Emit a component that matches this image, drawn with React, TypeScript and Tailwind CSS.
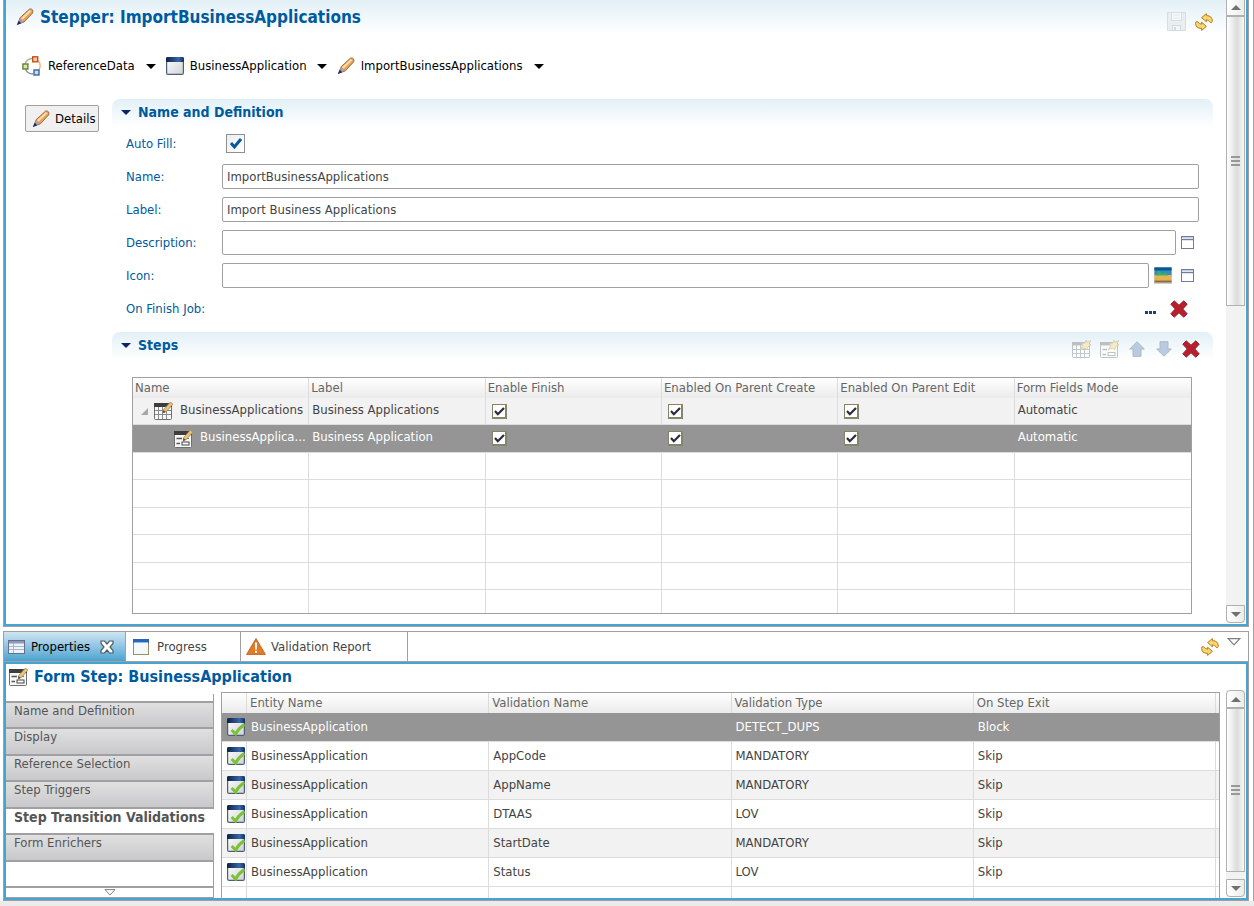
import React, { useState } from "react";

type IconProps = { className?: string };

const PencilIcon = ({ className = "size-[18px]" }: IconProps) => (
	<svg viewBox="0 0 18 18" className={className} aria-hidden="true">
		<path d="M13.6 1 L4.2 9.6 L2.4 14.2 L4 15.4 L8.2 14 L16.6 5 C17.6 2.4 16.2 .4 13.6 1Z" fill="#e5a05a" stroke="#94683c" strokeWidth=".9" />
		<path d="M13.8 2 L5 10.2 L6.6 11.8 L15.4 3.2Z" fill="#fcdcaa" />
		<path d="M4 10.4 L7.6 13.8 L4 15.2 L2.6 14.2Z" fill="#a8a0ac" />
		<path d="M2.8 12.8 L5.2 15.2 L1.4 17 L.8 16.4Z" fill="#1f2a66" />
	</svg>
);

const ModelIcon = () => (
	<svg viewBox="0 0 20 20" className="size-5" aria-hidden="true">
		<path d="M10 2.5 A8 8 0 0 0 3 8" fill="none" stroke="#9dba88" strokeWidth="1.3" />
		<path d="M3.5 13 A8 8 0 0 0 11 18" fill="none" stroke="#7690b8" strokeWidth="1.3" />
		<path d="M16 4.5 A8 8 0 0 1 16.8 14" fill="none" stroke="#f5b48a" strokeWidth="1.5" />
		<rect x="10.7" y=".8" width="5" height="5" fill="#f3c7a5" stroke="#c0551c" strokeWidth="1.4" />
		<rect x=".9" y="8" width="5" height="5" fill="#d7e5b4" stroke="#66822e" strokeWidth="1.4" />
		<rect x="12" y="14" width="5" height="5" fill="#c8dcf0" stroke="#3c649b" strokeWidth="1.4" />
	</svg>
);

const EntityIcon = ({ checked = false }: { checked?: boolean }) => (
	<svg viewBox="0 0 18 18" className="size-[18px]" aria-hidden="true">
		<defs>
			<linearGradient id="entityBar">
				<stop offset="0" stopColor="#0d2144" />
				<stop offset=".7" stopColor="#3767a8" />
				<stop offset="1" stopColor="#12305f" />
			</linearGradient>
			<linearGradient id="entityBody" x1="0" y1="0" x2="1" y2="1">
				<stop offset="0" stopColor="#ffffff" />
				<stop offset="1" stopColor="#cfd1d3" />
			</linearGradient>
		</defs>
		<rect x=".6" y=".6" width="16.8" height="16.8" rx="1.5" fill="url(#entityBody)" stroke="#4d5f78" strokeWidth="1.2" />
		<path d="M0 5 V1.5 Q0 0 1.5 0 H16.5 Q18 0 18 1.5 V5Z" fill="url(#entityBar)" />
		{checked && (
			<path d="M4.6 12 L8.6 16 Q11.5 10.4 17.4 6.6" fill="none" stroke="#7cc138" strokeWidth="3" />
		)}
	</svg>
);

const RefreshIcon = () => (
	<svg viewBox="0 0 18 18" className="size-[18px]" aria-hidden="true">
		<g fill="#f8d670" stroke="#b57e1d" strokeWidth="1" strokeLinejoin="round">
			<path d="M6.6 4.6 L11.4 .6 V2.6 Q17.2 2.6 17.4 8.4 L16.2 9.8 L14.6 8.8 Q14 6.8 11.4 6.8 V8.8Z" />
			<path d="M11.4 13.4 L6.6 17.4 V15.4 Q.8 15.4 .6 10.4 L.8 9 L2.6 8.6 Q4.2 11.2 6.6 11.2 V9.2Z" />
		</g>
	</svg>
);

const SaveIcon = () => (
	<svg viewBox="0 0 19 19" className="size-[19px]" aria-hidden="true">
		<path d="M.5 .5 H18.5 V18.5 H.5Z" fill="#e9eef1" stroke="#d8dde0" />
		<rect x="4.5" y=".5" width="10" height="8" fill="#f6f8f9" stroke="#d8dde0" />
		<path d="M6 3 H13 M6 6 H13" stroke="#e6eaec" />
		<rect x="5.5" y="13.5" width="8" height="5" fill="#f3f5f6" stroke="#d5dadd" />
		<rect x="7" y="15" width="2" height="3" fill="#d5dadd" />
	</svg>
);

// step icons: a grid for collections, a form for single records
const StepIcon = ({ form = false }: { form?: boolean }) => (
	<svg viewBox="0 0 19 18" className="h-[18px] w-[19px]" aria-hidden="true">
		<rect x=".5" y="1.5" width="17" height="16" rx="1" fill="#f7f7f7" stroke="#707070" />
		<path d="M0 1 H18 V5 H0Z" fill="#3d3d3d" />
		{form ? (
			<g>
				<path d="M2.5 8.5 H8 M2.5 13.5 H6" stroke="#555" strokeWidth="1.6" />
				<rect x="8" y="12" width="7" height="3" fill="#fff" stroke="#444" />
				<path d="M9 8.5 H15" stroke="#777" />
			</g>
		) : (
			<path d="M4.5 5 V17 M8.5 5 V17 M12.5 5 V17 M1 8.5 H17 M1 12.5 H17" stroke="#8a8a8a" />
		)}
		<path d="M16.4 0 L19 2.2 L12.4 9.4 L9.4 10.6 L9.8 7.2Z" fill="#e6c282" stroke="#a07c44" strokeWidth=".7" />
		<path d="M9 11 L9.6 8.4 L11.6 10Z" fill="#333" />
	</svg>
);

const NewStepIcon = ({ form = false }: { form?: boolean }) => (
	<svg viewBox="0 0 19 19" className="size-[19px]" aria-hidden="true">
		<rect x=".5" y="2.5" width="17" height="15" rx="1" fill="#fbfcfc" stroke="#c0c3c5" />
		<path d="M0 2 H18 V5.5 H0Z" fill="#bdc0c2" />
		{form ? (
			<g stroke="#bfc2c4">
				<path d="M2.5 9.5 H7 M2.5 14.5 H6" strokeWidth="1.6" />
				<rect x="8" y="12.5" width="7" height="3" fill="#fff" />
			</g>
		) : (
			<path d="M4.5 5 V17 M8.5 5 V17 M12.5 5 V17 M1 9.5 H17 M1 13.5 H17" stroke="#c5c8ca" />
		)}
		<path d="M14.2 0 L15.2 2.4 L18.8 .4 L17.2 3.8 L19 5 L16.4 6.2 L14.6 9.8 L12.8 8 L8.4 9.6 L10.8 5.6 L9.4 3.6 L12.8 3Z" fill="#f4ecc9" stroke="#cfc59e" strokeWidth=".7" />
	</svg>
);

const ArrowIcon = ({ down = false }: { down?: boolean }) => (
	<svg viewBox="0 0 16 16" className={down ? "size-4 rotate-180" : "size-4"} aria-hidden="true">
		<path d="M8 .8 L15.3 8 H12 V15.3 H4 V8 H.7Z" fill="#b9cbe0" stroke="#b0b8c2" />
	</svg>
);

const DeleteIcon = () => (
	<svg viewBox="0 0 18 18" className="size-[18px]" aria-hidden="true">
		<path d="M4.2 .8 L9 5.2 L13.8 .8 L17.2 4.2 L12.8 9 L17.2 13.8 L13.8 17.2 L9 12.8 L4.2 17.2 L.8 13.8 L5.2 9 L.8 4.2Z" fill="#b5202f" stroke="#a0202c" strokeLinejoin="round" />
	</svg>
);

const WindowIcon = () => (
	<svg viewBox="0 0 13 13" className="size-[13px]" aria-hidden="true">
		<rect x=".5" y=".5" width="12" height="12" fill="#fff" stroke="#6f7c9c" />
		<path d="M1 1.5 H12" stroke="#c5cfe2" />
		<path d="M1 3.5 H12" stroke="#6f7c9c" strokeWidth="1.4" />
	</svg>
);

const PictureIcon = () => (
	<svg viewBox="0 0 18 17" className="h-[17px] w-[18px]" aria-hidden="true">
		<rect width="18" height="17" fill="#d0d0c4" />
		<rect x=".5" y=".5" width="17" height="8" fill="#2b8fc4" />
		<path d="M.5 2 H17.5" stroke="#0f5590" strokeWidth="3" />
		<rect x=".5" y="8" width="17" height="5.5" fill="#e7b252" />
		<path d="M2 8.6 L3 6.4 L4.6 3.6 L6.4 5 L7.6 7 L9.6 6.4 L12 5.6 L14 8.6Z" fill="#3fae62" />
		<rect x=".5" y="13.5" width="17" height="2" fill="#8d6d37" />
	</svg>
);

const TableIcon = () => (
	<svg viewBox="0 0 17 14" className="h-[14px] w-[17px]" aria-hidden="true">
		<rect x=".5" y=".5" width="16" height="13" fill="#eef3fa" stroke="#64718e" />
		<rect x="1" y="1" width="15" height="2.5" fill="#8b9ab8" />
		<path d="M1 6.5 H16 M1 9.5 H16 M5.5 3 V13" stroke="#a9b5cc" />
	</svg>
);

const ProgressIcon = () => (
	<svg viewBox="0 0 16 16" className="size-4" aria-hidden="true">
		<rect x=".5" y=".5" width="15" height="15" fill="#f3f9fb" stroke="#9a8f63" />
		<rect width="16" height="4" fill="#2a66b8" />
		<path d="M1 3.5 H15" stroke="#8fbcec" />
	</svg>
);

const WarningIcon = () => (
	<svg viewBox="0 0 20 17" className="h-[17px] w-5" aria-hidden="true">
		<path d="M10 .6 L19.4 16.4 H.6Z" fill="#e07b28" stroke="#c56526" strokeLinejoin="round" />
		<path d="M9 4.5 H11 L10.8 11.5 H9.2Z M9 12.8 H11 V14.8 H9Z" fill="#fff" />
	</svg>
);

const CloseIcon = () => (
	<svg viewBox="0 0 14 14" className="size-[14px]" aria-hidden="true">
		<path d="M1 1 H4.5 L7 4 L9.5 1 H13 V3.5 L10 7 L13 10.5 V13 H9.5 L7 10 L4.5 13 H1 V10.5 L4 7 L1 3.5Z" fill="#fff" stroke="#4c5d6a" strokeWidth="1.2" />
	</svg>
);

const Triangle = ({ className }: IconProps) => (
	<svg viewBox="0 0 10 5" className={className} aria-hidden="true">
		<path d="M0 0 H10 L5 5Z" fill="currentColor" />
	</svg>
);

const HollowTriangle = ({ className = "h-[7px] w-3" }: IconProps) => (
	<svg viewBox="0 0 12 7" className={className} aria-hidden="true">
		<path d="M1 .6 H11 L6 6Z" fill="#fff" stroke="#808080" />
	</svg>
);

const Scrollbar = ({ cut = false }: { cut?: boolean }) => (
	<div className="flex w-[19px] flex-1 flex-col bg-[#f2f2f2]">
		<button
			aria-label="Scroll up"
			className={`flex w-full items-center justify-center border border-[#b0b0b0] bg-gradient-to-r from-white to-[#ececec] ${
				cut ? "h-4 border-t-0" : "h-[18px] rounded-t"
			}`}>
			<Triangle className="h-[5px] w-[10px] rotate-180 text-[#707070]" />
		</button>
		<div
			className={`flex w-full flex-col items-center justify-center gap-[2px] border border-[#b0b0b0] bg-gradient-to-r from-white via-[#dcdcdc] via-60% to-[#f8f8f8] ${
				cut ? "h-[290px]" : "mb-[7px] flex-1"
			}`}>
			<span className="h-[2px] w-[9px] bg-[#989898]" />
			<span className="h-[2px] w-[9px] bg-[#989898]" />
			<span className="h-[2px] w-[9px] bg-[#989898]" />
		</div>
		{cut && <div className="flex-1" />}
		<button
			aria-label="Scroll down"
			className="flex h-[18px] w-full items-center justify-center rounded-b border border-[#b0b0b0] bg-gradient-to-r from-white to-[#ececec]">
			<Triangle className="h-[5px] w-[10px] text-[#707070]" />
		</button>
	</div>
);

const CellCheck = ({ label }: { label: string }) => (
	<label className="relative block size-[15px]">
		<input
			type="checkbox"
			defaultChecked
			aria-label={label}
			className="peer block size-[15px] appearance-none border border-r-2 border-b-2 border-[#85856b] bg-white"
		/>
		<svg viewBox="0 0 15 15" className="pointer-events-none absolute inset-0 hidden size-[15px] peer-checked:block">
			<path d="M3 7 L5.8 10.2 L12 4" fill="none" stroke="#2b2b3a" strokeWidth="2.2" />
		</svg>
	</label>
);

const SectionHeader = ({ title, children }: { title: string; children?: React.ReactNode }) => (
	<div className="flex h-7 items-start rounded-t-lg bg-gradient-to-b from-[#e2f0f7] to-white pr-2">
		<button className="flex h-[26px] items-center pl-[9px] text-[14px] font-bold text-[#005a9e]">
			<Triangle className="mr-[7px] h-[5px] w-[10px] text-[#0a246a]" />
			{title}
		</button>
		<div className="ml-auto flex h-[34px] items-center">{children}</div>
	</div>
);

const Field = ({ id, label, value = "", children }: { id: string; label: string; value?: string; children?: React.ReactNode }) => (
	<div className="flex h-[33px] items-center">
		<label htmlFor={id} className="w-24 shrink-0 text-[#005a9e]">
			{label}
		</label>
		<input
			id={id}
			defaultValue={value}
			className="h-[25px] min-w-0 flex-1 rounded-xs border border-[#a0a0a0] bg-white px-1 text-[#444]"
		/>
		{children}
	</div>
);

const stepColumns = ["Name", "Label", "Enable Finish", "Enabled On Parent Create", "Enabled On Parent Edit", "Form Fields Mode"];
const steps = [
	{ name: "BusinessApplications", label: "Business Applications", mode: "Automatic", child: false },
	{ name: "BusinessApplica...", label: "Business Application", mode: "Automatic", child: true },
];
const emptyRows = [1, 2, 3, 4, 5];

const validationColumns = ["Entity Name", "Validation Name", "Validation Type", "On Step Exit"];
const validations = [
	{ name: "", type: "DETECT_DUPS", exit: "Block" },
	{ name: "AppCode", type: "MANDATORY", exit: "Skip" },
	{ name: "AppName", type: "MANDATORY", exit: "Skip" },
	{ name: "DTAAS", type: "LOV", exit: "Skip" },
	{ name: "StartDate", type: "MANDATORY", exit: "Skip" },
	{ name: "Status", type: "LOV", exit: "Skip" },
];

const pages = ["Name and Definition", "Display", "Reference Selection", "Step Triggers", "Step Transition Validations", "Form Enrichers"];

function StepsTable() {
	const [selected, setSelected] = useState(1);

	return (
		<table className="w-full table-fixed border-separate border-spacing-0 border border-[#a0a0a0] text-left">
			<thead className="bg-gradient-to-b from-white to-[#ebebeb] text-[#666]">
				<tr className="h-5">
					{stepColumns.map((column) => (
						<th key={column} className="overflow-hidden border-r border-[#dcdcdc] px-[2px] font-normal whitespace-nowrap last:border-r-0">
							{column}
						</th>
					))}
				</tr>
			</thead>
			<tbody>
				{steps.map((step, i) => (
					<tr
						key={step.name}
						onClick={() => setSelected(i)}
						className={`h-[27px] even:h-7 [&>td]:border-b [&>td]:border-[#dcdcdc] ${
							selected === i ? "bg-[#959595] text-white" : "bg-[#f2f2f2] text-[#444] [&>td:not(:last-child)]:border-r"
						}`}>
						<td>
							<div className={step.child ? "flex items-center pl-[41px]" : "flex items-center pl-2"}>
								{!step.child && (
									<svg viewBox="0 0 7 7" className="mr-[6px] size-[7px] shrink-0">
										<path d="M7 0 V7 H0Z" fill="#a8a8a8" />
									</svg>
								)}
								<span className="shrink-0">
									<StepIcon form={step.child} />
								</span>
								<span className="pb-[3px] pl-[7px] whitespace-nowrap">{step.name}</span>
							</div>
						</td>
						<td className="px-[3px] pb-[3px] whitespace-nowrap">{step.label}</td>
						<td className="px-[6px]"><CellCheck label="Enable Finish" /></td>
						<td className="px-[6px]"><CellCheck label="Enabled On Parent Create" /></td>
						<td className="px-[6px]"><CellCheck label="Enabled On Parent Edit" /></td>
						<td className="px-[3px] pb-[3px]">{step.mode}</td>
					</tr>
				))}
				{emptyRows.map((row) => (
					<tr key={row} className="h-[27px] even:h-7">
						{stepColumns.map((column) => (
							<td key={column} className="border-r border-b border-[#dcdcdc] last:border-r-0" />
						))}
					</tr>
				))}
				<tr className="h-[23px]">
					{stepColumns.map((column) => (
						<td key={column} className="border-r border-[#dcdcdc] last:border-r-0" />
					))}
				</tr>
			</tbody>
		</table>
	);
}

function ValidationsTable() {
	const [selected, setSelected] = useState(0);

	return (
		<table className="w-full table-fixed border-separate border-spacing-0 border border-b-0 border-[#a0a0a0] text-left">
			<colgroup>
				<col className="w-[25px]" />
				<col />
				<col />
				<col />
				<col />
				<col className="w-[3px]" />
			</colgroup>
			<thead className="bg-gradient-to-b from-white to-[#ebebeb] text-[#666]">
				<tr className="h-5 [&>*:not(:last-child)]:border-r [&>*]:border-[#dcdcdc]">
					<td />
					{validationColumns.map((column) => (
						<th key={column} className="px-[3px] font-normal">
							{column}
						</th>
					))}
					<td />
				</tr>
			</thead>
			<tbody>
				{validations.map((validation, i) => (
					<tr
						key={i}
						onClick={() => setSelected(i)}
						className={`h-[29px] [&>td]:border-b [&>td]:border-[#dcdcdc] ${
							selected === i
								? "bg-[#959595] text-white"
								: "text-[#444] odd:bg-[#f2f2f2] [&>td:not(:last-child)]:border-r"
						}`}>
						<td className="pl-[5px]"><EntityIcon checked /></td>
						<td className="px-1">BusinessApplication</td>
						<td className="px-1">{validation.name}</td>
						<td className="px-1">{validation.type}</td>
						<td className="px-1">{validation.exit}</td>
						<td />
					</tr>
				))}
				<tr className="h-[11px] [&>td:not(:last-child)]:border-r [&>td]:border-[#dcdcdc]">
					<td />
					<td />
					<td />
					<td />
					<td />
					<td />
				</tr>
			</tbody>
		</table>
	);
}

function StepperEditor() {
	return (
		<section className="flex flex-1 border-b border-[#a0a0a0]">
			<div className="flex flex-1 border-x border-[#a0a0a0]">
				<div className="flex min-w-0 flex-1 border-2 border-t-0 border-[#47a3d1] pr-px pb-px">
					<div className="min-w-0 flex-1">
						<header className="flex h-[34px] justify-between bg-gradient-to-b from-[#e2f0f7] to-white pr-[13px] pl-[10px]">
							<h1 className="flex items-center gap-[6px] text-[17px] font-bold text-[#005a9e]">
								<PencilIcon />
								Stepper: ImportBusinessApplications
							</h1>
							<div className="flex items-end gap-[9px] pb-[3px]">
								<button aria-label="Save" disabled><SaveIcon /></button>
								<button aria-label="Refresh"><RefreshIcon /></button>
							</div>
						</header>
						<nav className="mt-5 flex h-6 items-center pl-4 text-black">
							<button className="flex items-center gap-[6px]">
								<ModelIcon />
								ReferenceData
								<Triangle className="ml-[5px] h-[5px] w-[10px]" />
							</button>
							<button className="ml-[10px] flex items-center gap-[6px]">
								<EntityIcon />
								BusinessApplication
								<Triangle className="ml-1 h-[5px] w-[10px]" />
							</button>
							<button className="ml-[10px] flex items-center gap-[6px]">
								<PencilIcon />
								ImportBusinessApplications
								<Triangle className="ml-[5px] h-[5px] w-[10px]" />
							</button>
						</nav>
						<div className="flex items-start pt-[21px] pr-[13px] pl-[19px]">
							<button className="mt-[6px] flex h-[27px] w-[74px] shrink-0 items-center gap-[5px] rounded-xs border border-[#a0a0a0] bg-[#f0f0f0] pl-[6px] text-black">
								<PencilIcon />
								Details
							</button>
							<div className="ml-[13px] min-w-0 flex-1">
								<SectionHeader title="Name and Definition" />
								<div className="pr-[14px] pl-[14px]">
									<div className="flex h-[33px] items-center">
										<label htmlFor="autoFill" className="w-24 shrink-0 text-[#005a9e]">
											Auto Fill:
										</label>
										<div className="relative ml-1 size-[19px]">
											<input
												id="autoFill"
												type="checkbox"
												defaultChecked
												className="peer block size-[19px] appearance-none border border-[#909090] bg-gradient-to-br from-[#eee] to-white"
											/>
											<svg viewBox="0 0 19 19" className="pointer-events-none absolute inset-0 hidden size-[19px] peer-checked:block">
												<path d="M5 9 L8.4 13 L15 5" fill="none" stroke="#05599c" strokeWidth="3" />
											</svg>
										</div>
									</div>
									<Field id="name" label="Name:" value="ImportBusinessApplications" />
									<Field id="label" label="Label:" value="Import Business Applications" />
									<Field id="description" label="Description:">
										<button aria-label="Edit description" className="flex w-[23px] justify-center"><WindowIcon /></button>
									</Field>
									<Field id="icon" label="Icon:">
										<button aria-label="Choose icon" className="flex w-[27px] justify-center"><PictureIcon /></button>
										<button aria-label="Edit icon" className="flex w-[23px] justify-center"><WindowIcon /></button>
									</Field>
									<div className="flex h-[33px] items-center">
										<span className="text-[#005a9e]">On Finish Job:</span>
										<button aria-label="Choose job" className="ml-auto flex gap-px pt-2">
											<span className="size-[3px] bg-[#1f3f73]" />
											<span className="size-[3px] bg-[#1f3f73]" />
											<span className="size-[3px] bg-[#1f3f73]" />
										</button>
										<button aria-label="Clear job" className="mr-[11px] ml-[14px]"><DeleteIcon /></button>
									</div>
								</div>
								<div className="pt-[7px]">
									<SectionHeader title="Steps">
										<button aria-label="Add collection step" className="flex w-7 justify-center"><NewStepIcon /></button>
										<button aria-label="Add form step" className="flex w-7 justify-center"><NewStepIcon form /></button>
										<button aria-label="Move up" className="flex w-[27px] justify-center"><ArrowIcon /></button>
										<button aria-label="Move down" className="flex w-[27px] justify-center"><ArrowIcon down /></button>
										<button aria-label="Delete step" className="flex w-7 justify-center"><DeleteIcon /></button>
									</SectionHeader>
								</div>
								<div className="pt-[17px] pr-[21px] pb-[9px] pl-5">
									<StepsTable />
								</div>
							</div>
						</div>
					</div>
					<div className="flex">
						<Scrollbar cut />
					</div>
				</div>
			</div>
		</section>
	);
}

function PropertiesView() {
	const [page, setPage] = useState("Step Transition Validations");

	return (
		<section className="mt-1 border border-[#a0a0a0]">
			<div className="flex h-[30px] items-stretch border-b border-[#a0a0a0] text-[#444]">
				<button className="flex items-center bg-gradient-to-b from-[#cfe5f1] to-[#47a3d1] pr-[11px] pl-1 text-black">
					<TableIcon />
					<span className="pr-[10px] pl-[6px]">Properties</span>
					<CloseIcon />
				</button>
				<button className="flex w-[116px] items-center gap-2 border-x border-[#a0a0a0] pl-[7px]">
					<ProgressIcon />
					Progress
				</button>
				<button className="flex w-[167px] items-center gap-[5px] border-r border-[#a0a0a0] pl-[5px]">
					<WarningIcon />
					Validation Report
				</button>
				<div className="ml-auto flex items-start gap-2 pt-[6px] pr-[7px]">
					<button aria-label="Refresh properties"><RefreshIcon /></button>
					<button aria-label="View menu"><HollowTriangle className="h-[8px] w-[14px]" /></button>
				</div>
			</div>
			<div className="flex border-2 border-[#47a3d1] pr-px">
				<div className="min-w-0 flex-1">
					<h2 className="flex h-7 items-center gap-[6px] pb-[2px] pl-[3px] text-[16px] font-bold text-[#005a9e]">
						<StepIcon form />
						Form Step: BusinessApplication
					</h2>
					<div className="flex items-start gap-[7px]">
						<nav className="w-[208px] shrink-0 pt-[2px] text-[#555]">
							<div className="h-[7px] border-r border-[#a0a0a0]" />
							{pages.map((item) => (
								<button
									key={item}
									onClick={() => setPage(item)}
									className={`flex h-[26px] w-full items-start border-t-2 border-[#a0a0a4] pl-2 leading-4 whitespace-nowrap odd:h-[27px] ${
										page === item ? "bg-white text-[14px] font-bold" : "border-r bg-gradient-to-b from-[#e0e0e0] to-[#c9c9cc]"
									}`}>
									{item}
								</button>
							))}
							<div className="h-[26px] border-t-2 border-r border-[#a0a0a4]" />
							<button aria-label="More pages" className="flex h-3 w-full items-center justify-center border-t-2 border-r border-b border-[#a0a0a4]">
								<HollowTriangle />
							</button>
						</nav>
						<div className="min-w-0 flex-1">
							<ValidationsTable />
						</div>
					</div>
				</div>
				<div className="ml-[6px] flex pt-[26px] pb-px">
					<Scrollbar />
				</div>
			</div>
		</section>
	);
}

export default function App() {
	return (
		<div className="flex min-h-screen flex-col bg-white font-['DejaVu_Sans_Condensed','Noto_Sans',sans-serif] text-[13px] leading-[18px]">
			<div className="flex flex-1 flex-col border-r border-[#a0a0a0] pr-1 pl-[3px]">
				<StepperEditor />
				<PropertiesView />
			</div>
			<footer className="h-[5px] bg-[#ebebeb]" />
		</div>
	);
}
